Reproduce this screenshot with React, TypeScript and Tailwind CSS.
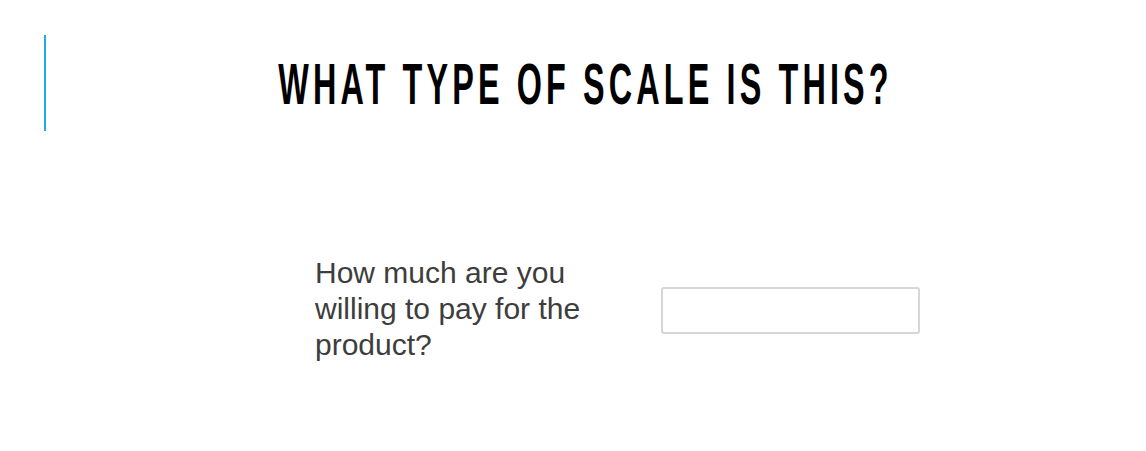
export default function App() {
  return (
    <div className="w-[1146px] h-[451px] bg-white overflow-hidden">
      <header className="flex items-start">
        <div className="ml-[44px] mt-[35px] h-[96px] w-[2px] shrink-0 bg-[#1cade4]" />
        <div className="flex min-w-0 flex-1 justify-center pr-[22px] pt-[55px]">
          <h1 className="whitespace-nowrap font-['Liberation_Sans',Arial,sans-serif] text-[58px] leading-[58px] font-bold tracking-[7.4px] text-black scale-x-[0.558]">
            WHAT TYPE OF SCALE IS THIS?
          </h1>
        </div>
      </header>

      <div className="mt-[124px] ml-[315px] flex items-start gap-[56px]">
        <p className="w-[290px] shrink-0 font-['Liberation_Sans',Arial,sans-serif] text-[30px] leading-[36px] text-[#3d3d3d]">
          How much are you willing to pay for the product?
        </p>
        <input
          type="text"
          aria-label="Amount"
          className="mt-[32px] h-[47px] w-[259px] shrink-0 rounded-[3px] border-2 border-[#d6d6d6] bg-white outline-none"
        />
      </div>
    </div>
  );
}
